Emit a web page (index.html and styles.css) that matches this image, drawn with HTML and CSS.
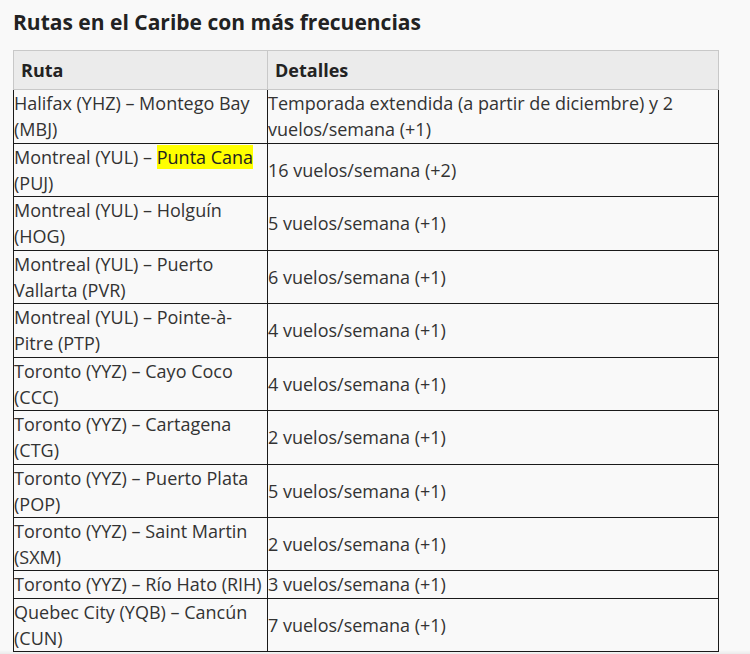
FILE: index.html
```html
<!DOCTYPE html>
<html lang="es">
<head>
<meta charset="utf-8">
<link rel="stylesheet" href="styles.css">
</head>
<body>
<div class="page">
  <h2 class="title">Rutas en el Caribe con más frecuencias</h2>
  <table class="routes">
    <thead>
      <tr><th class="c1">Ruta</th><th>Detalles</th></tr>
    </thead>
    <tbody>
      <tr><td>Halifax (YHZ) – Montego Bay (MBJ)</td><td>Temporada extendida (a partir de diciembre) y 2 vuelos/semana (+1)</td></tr>
      <tr><td>Montreal (YUL) – <mark class="hl">Punta Cana</mark> (PUJ)</td><td>16 vuelos/semana (+2)</td></tr>
      <tr><td>Montreal (YUL) – Holguín (HOG)</td><td>5 vuelos/semana (+1)</td></tr>
      <tr><td>Montreal (YUL) – Puerto Vallarta (PVR)</td><td>6 vuelos/semana (+1)</td></tr>
      <tr><td>Montreal (YUL) – Pointe-à-Pitre (PTP)</td><td>4 vuelos/semana (+1)</td></tr>
      <tr><td>Toronto (YYZ) – Cayo Coco (CCC)</td><td>4 vuelos/semana (+1)</td></tr>
      <tr><td>Toronto (YYZ) – Cartagena (CTG)</td><td>2 vuelos/semana (+1)</td></tr>
      <tr><td>Toronto (YYZ) – Puerto Plata (POP)</td><td>5 vuelos/semana (+1)</td></tr>
      <tr><td>Toronto (YYZ) – Saint Martin (SXM)</td><td>2 vuelos/semana (+1)</td></tr>
      <tr><td>Toronto (YYZ) – Río Hato (RIH)</td><td>3 vuelos/semana (+1)</td></tr>
      <tr><td>Quebec City (YQB) – Cancún (CUN)</td><td>7 vuelos/semana (+1)</td></tr>
    </tbody>
  </table>
</div>
<div class="fade"></div>
</body>
</html>
```
FILE: styles.css
```css
html, body {
  margin: 0;
  padding: 0;
  background: #f9f9f9;
}
body {
  font-family: "Open Sans", "Liberation Sans", sans-serif;
  color: #333;
  overflow: hidden;
  height: 654px;
}
.page {
  padding: 7px 0 0 13px;
}
.title {
  margin: 0 0 13px 0;
  font-size: 21px;
  line-height: 30px;
  font-weight: 700;
  color: #222;
}
.routes {
  border-collapse: collapse;
  width: 706px;
  font-size: 18px;
  line-height: 26.24px;
  color: #333;
}
.routes th {
  background: #ebebeb;
  border: 1px solid #c8c8c8;
  text-align: left;
  font-weight: 700;
  padding: 6px 8px 6px 7px;
  color: #222;
}
.routes th.c1 {
  width: 238px;
}
.routes td {
  border: 1px solid #1a1a1a;
  padding: 0;
  vertical-align: middle;
}
.hl {
  background: #ffff00;
  color: #222;
}
.fade {
  position: fixed;
  left: 0;
  right: 0;
  bottom: 0;
  height: 4px;
  background: linear-gradient(to bottom, rgba(0,0,0,0), rgba(0,0,0,0.06));
}
```
